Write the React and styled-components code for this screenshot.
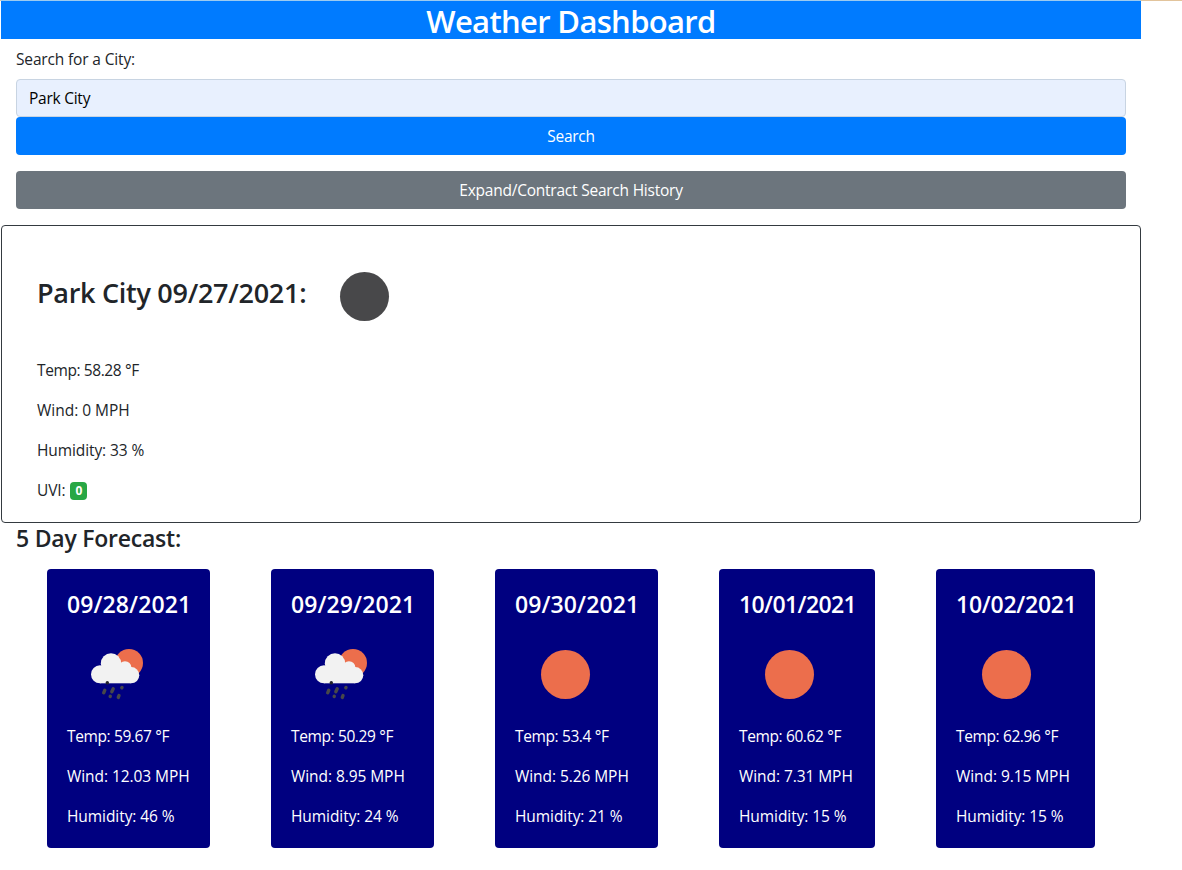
import React from "react";
import styled, { createGlobalStyle } from "styled-components";

const GlobalStyle = createGlobalStyle`
  *, *::before, *::after { box-sizing: border-box; }
  body {
    margin: 0;
    background: #fff;
    color: #212529;
    font-family: "Segoe UI", "Open Sans", "Noto Sans", sans-serif;
    font-size: 15.5px;
    line-height: 24px;
    overflow: hidden;
  }
  h1, h2, h3, p { margin: 0; }
`;

const Page = styled.div`
  height: 870px;
  border-top: 1px solid #e2c49c;
  padding-left: 1px;
`;
const Container = styled.main`
  width: 1140px;
`;
const Header = styled.header`
  height: 39px;
  margin-top: -1px;
  border-top: 1px solid #9ccbf0;
  background: #007bff;
  color: #fff;
  text-align: center;
`;
const Fit = styled.span`
  display: inline-block;
  white-space: nowrap;
  letter-spacing: ${(p) => p.$ls || 0}px;
`;
const Title = styled.h1`
  font-size: 31px;
  font-weight: 600;
  line-height: 40px;
`;
const Form = styled.form`
  display: flex;
  flex-direction: column;
  padding: 8px 15px 0;
`;
const Label = styled.label`
  margin-bottom: 8px;
  height: 24px;
`;
const Input = styled.input`
  height: 38px;
  padding: 6px 12px;
  border: 1px solid #c8d4e2;
  border-radius: 4px;
  background: #e8f0fe;
  color: #000;
  font: inherit;
  letter-spacing: -0.25px;
  outline: none;
`;
const Button = styled.button`
  height: 38px;
  padding: 0;
  border: 0;
  border-radius: 4px;
  background: ${(p) => (p.$secondary ? "#6c757d" : "#007bff")};
  margin-top: ${(p) => (p.$secondary ? 16 : 0)}px;
  color: #fff;
  font: inherit;
`;
const Current = styled.section`
  margin-top: 16px;
  height: 298px;
  padding: 20px 35px;
  border: 1px solid #343a40;
  border-radius: 4px;
`;
const CurrentHead = styled.div`
  display: flex;
  align-items: center;
  height: 100px;
  margin-bottom: 12px;
`;
const City = styled.h2`
  width: 277px;
  padding-bottom: 6px;
  font-size: 27px;
  font-weight: 600;
  line-height: 34px;
`;
const Stats = styled.div`
  display: flex;
  flex-direction: column;
  gap: 16px;
`;
const UvRow = styled.p`
  display: flex;
  align-items: center;
  gap: 5px;
`;
const Badge = styled.span`
  width: 17px;
  height: 18px;
  margin-top: 2px;
  border-radius: 4px;
  background: #28a745;
  color: #fff;
  font-size: 12px;
  font-weight: 700;
  line-height: 18px;
  text-align: center;
`;
const ForecastTitle = styled.h2`
  padding-left: 15px;
  font-size: 23px;
  font-weight: 600;
  line-height: 30px;
  height: 46px;
`;
const Cards = styled.section`
  display: flex;
  gap: 61px;
  padding-left: 46px;
`;
const Card = styled.article`
  flex: none;
  width: ${(p) => p.$width}px;
  height: 279px;
  padding: 20px;
  border-radius: 4px;
  background: #000080;
  color: #fff;
`;
const DateTitle = styled.h3`
  height: 35px;
  font-size: 23px;
  font-weight: 600;
  line-height: 30px;
`;
const Icon = styled.svg`
  display: block;
  flex: none;
  width: 100px;
  height: 100px;
`;

const Disc = ({ color }) => (
  <Icon viewBox="0 0 100 100">
    <circle cx="50.5" cy="50.5" r="24.5" fill={color} />
  </Icon>
);

const RainIcon = () => (
  <Icon viewBox="0 0 100 100">
    <circle cx="62" cy="39" r="14" fill="#ec6e4c" />
    <g fill="#f2f2f2">
      <circle cx="33" cy="50.3" r="9" />
      <circle cx="44" cy="39.5" r="10.2" />
      <circle cx="58" cy="43.6" r="6.4" />
      <circle cx="64.2" cy="51.2" r="8.1" />
      <rect x="33" y="43" width="31" height="16.3" />
    </g>
    <g stroke="#48484a" strokeWidth="3.4" strokeLinecap="round">
      <path d="M40.3 58.8v.1" stroke="#22222a" />
      <path d="M37.8 66.2l-1.1 2.6M46.2 64.8l-1.4 2.9M55 63.5l-.2 .3M43.300 72.3l-.1 .2M52 71.5l-.7 1.9" />
    </g>
  </Icon>
);

const days = [
  { date: "09/28/2021", width: 163, ls: 0.1, rain: true, temp: "59.67", wind: "12.03", humidity: 46 },
  { date: "09/29/2021", width: 163, ls: 0.1, rain: true, temp: "50.29", wind: "8.95", humidity: 24 },
  { date: "09/30/2021", width: 163, ls: 0.1, temp: "53.4", wind: "5.26", humidity: 21 },
  { date: "10/01/2021", width: 156, ls: -0.6, temp: "60.62", wind: "7.31", humidity: 15 },
  { date: "10/02/2021", width: 159, ls: -0.25, temp: "62.96", wind: "9.15", humidity: 15 },
];

export default function App() {
  return (
    <>
      <GlobalStyle />
      <Page>
        <Container>
          <Header>
            <Title><Fit $ls={-0.67}>Weather Dashboard</Fit></Title>
          </Header>
          <Form onSubmit={(e) => e.preventDefault()}>
            <Label htmlFor="city"><Fit $ls={-0.15}>Search for a City:</Fit></Label>
            <Input id="city" defaultValue="Park City" />
            <Button><Fit $ls={-0.3}>Search</Fit></Button>
            <Button type="button" $secondary><Fit $ls={-0.23}>Expand/Contract Search History</Fit></Button>
          </Form>
          <Current>
            <CurrentHead>
              <City><Fit $ls={-0.28}>Park City 09/27/2021:</Fit></City>
              <Disc color="#48484a" />
            </CurrentHead>
            <Stats>
              <p><Fit $ls={-0.4}>Temp: 58.28 °F</Fit></p>
              <p><Fit $ls={-0.02}>Wind: 0 MPH</Fit></p>
              <p><Fit $ls={-0.1}>Humidity: 33 %</Fit></p>
              <UvRow><Fit $ls={-0.15}>UVI:</Fit><Badge>0</Badge></UvRow>
            </Stats>
          </Current>
          <ForecastTitle><Fit $ls={-0.23}>5 Day Forecast:</Fit></ForecastTitle>
          <Cards>
            {days.map((d) => (
              <Card key={d.date} $width={d.width}>
                <DateTitle><Fit $ls={d.ls}>{d.date}</Fit></DateTitle>
                {d.rain ? <RainIcon /> : <Disc color="#ec6e4c" />}
                <Stats>
                  <p><Fit $ls={-0.38}>Temp: {d.temp} °F</Fit></p>
                  <p><Fit $ls={-0.07}>Wind: {d.wind} MPH</Fit></p>
                  <p><Fit $ls={-0.07}>Humidity: {d.humidity} %</Fit></p>
                </Stats>
              </Card>
            ))}
          </Cards>
        </Container>
      </Page>
    </>
  );
}
